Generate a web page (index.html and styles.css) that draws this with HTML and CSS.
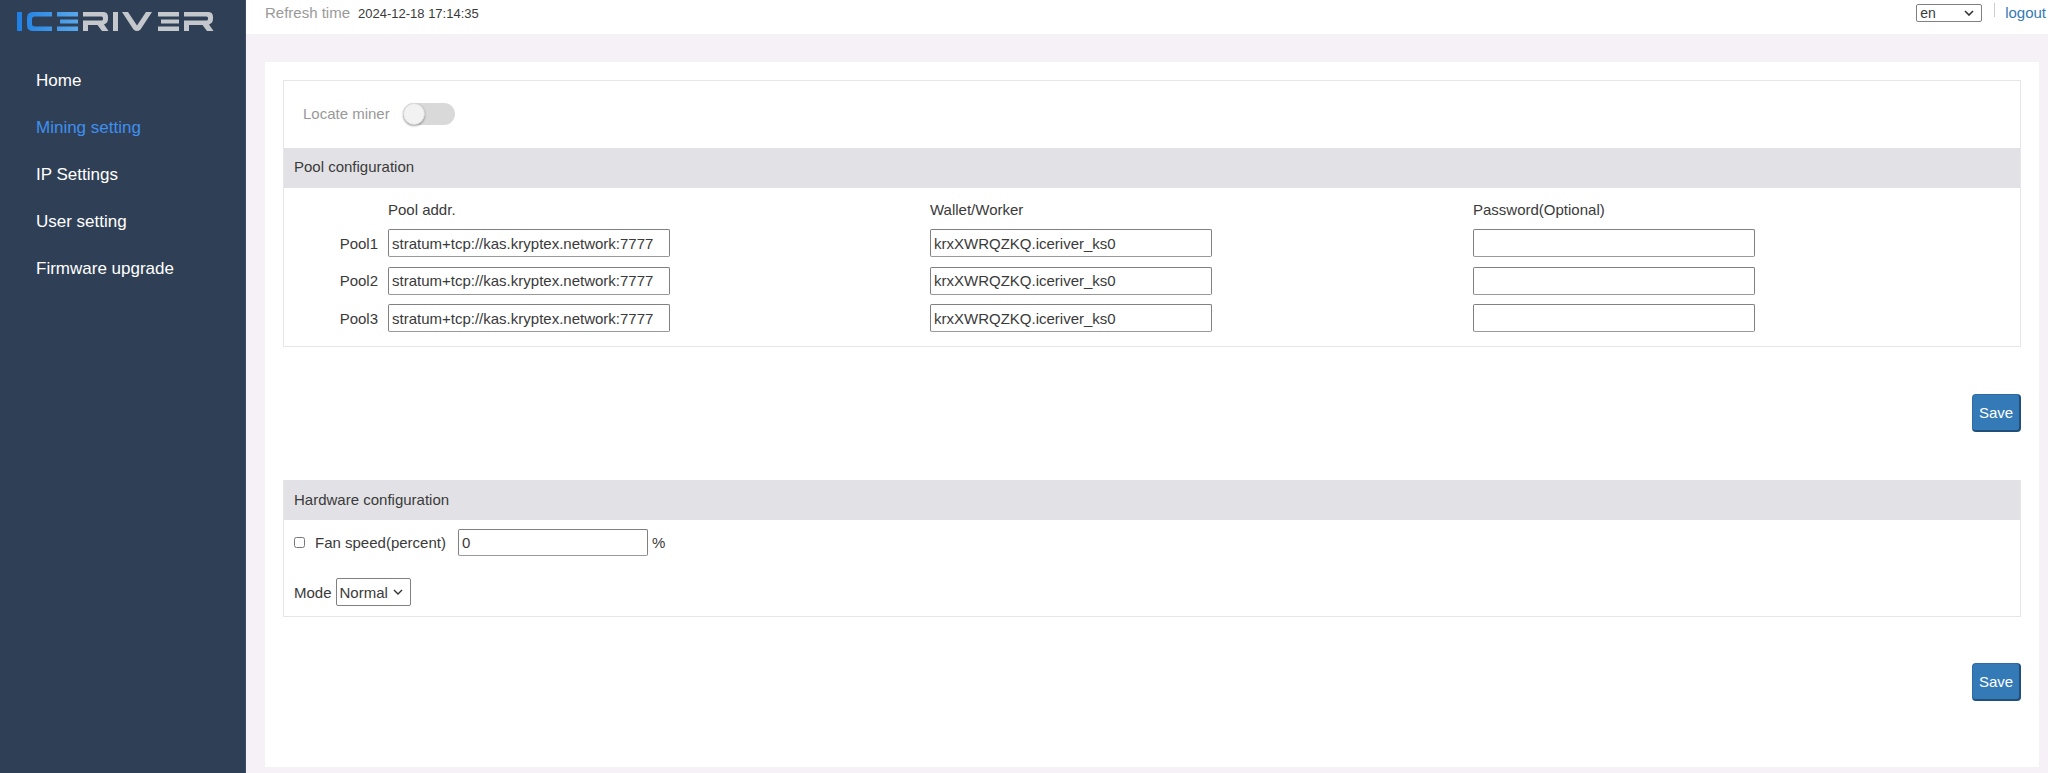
FILE: index.html
```html
<!DOCTYPE html>
<html lang="en">
<head>
<meta charset="utf-8">
<title>ICERIVER - Mining setting</title>
<link rel="stylesheet" href="styles.css">
</head>
<body>
<div class="app">
  <aside class="sidebar">
    <div class="logo">
      <svg width="245" height="40" viewBox="0 0 245 40" role="img" aria-label="ICERIVER">
        <defs>
          <linearGradient id="ice" x1="17" y1="0" x2="78" y2="0" gradientUnits="userSpaceOnUse">
            <stop offset="0" stop-color="#1e7fe4"/>
            <stop offset="1" stop-color="#58a8ea"/>
          </linearGradient>
        </defs>
        <g fill="url(#ice)">
          <rect x="17" y="12" width="5" height="19"/>
          <path d="M33 12H52V16.500H35Q32 16.500 32 19V24Q32 26.500 35 26.500H52V31H33Q27 31 27 25V18Q27 12 33 12Z"/>
          <path d="M57 12H78V16.500H57ZM60 19.500H78V23.500H60ZM57 26.500H78V31H57Z"/>
        </g>
        <g fill="#c4c8cc">
          <path d="M83 12H103Q108 12 108 17V19Q108 23 104 24.500L108.500 31H102L97.500 25H88V31H83V20.500H101.500Q103 20.500 103 19V18Q103 16.500 101.500 16.500H83Z"/>
          <rect x="113" y="12" width="5" height="19"/>
          <path d="M122 12H128L137 25.500L146 12H152L140.500 29.500Q137 32.500 133.500 29.500Z"/>
          <path d="M158 12H179V16.500H158ZM161 19.500H179V23.500H161ZM158 26.500H179V31H158Z"/>
          <path d="M184 12H208Q213 12 213 17V19Q213 23 209 24.500L213.500 31H207L202.500 25H189V31H184V20.500H206.500Q208 20.500 208 19V18Q208 16.500 206.500 16.500H184Z"/>
        </g>
      </svg>
    </div>
    <nav class="nav">
      <a class="nav-item" href="#">Home</a>
      <a class="nav-item active" href="#">Mining setting</a>
      <a class="nav-item" href="#">IP Settings</a>
      <a class="nav-item" href="#">User setting</a>
      <a class="nav-item" href="#">Firmware upgrade</a>
    </nav>
  </aside>
  <div class="main">
    <header class="topbar">
      <div class="refresh"><span class="refresh-label">Refresh time</span><span class="refresh-value">2024-12-18 17:14:35</span></div>
      <div class="top-actions">
        <select class="lang"><option>en</option></select>
        <span class="divider"></span>
        <a class="logout" href="#">logout</a>
      </div>
    </header>
    <main class="content">
      <section class="panel panel-pool">
        <div class="locate"><span class="locate-label">Locate miner</span><span class="toggle"><span class="knob"></span></span></div>
        <h2 class="panel-title">Pool configuration</h2>
        <div class="pool-grid">
          <span></span><span class="col-head">Pool addr.</span><span class="col-head">Wallet/Worker</span><span class="col-head">Password(Optional)</span>
          <label class="pool-label">Pool1</label><input class="field" value="stratum+tcp://kas.kryptex.network:7777"><input class="field" value="krxXWRQZKQ.iceriver_ks0"><input class="field">
          <label class="pool-label">Pool2</label><input class="field" value="stratum+tcp://kas.kryptex.network:7777"><input class="field" value="krxXWRQZKQ.iceriver_ks0"><input class="field">
          <label class="pool-label">Pool3</label><input class="field" value="stratum+tcp://kas.kryptex.network:7777"><input class="field" value="krxXWRQZKQ.iceriver_ks0"><input class="field">
        </div>
      </section>
      <div class="actions actions-pool"><button class="save">Save</button></div>
      <section class="panel panel-hw">
        <h2 class="panel-title panel-title-hw">Hardware configuration</h2>
        <div class="fan-row">
          <input class="check" type="checkbox">
          <span class="fan-label">Fan speed(percent)</span>
          <input class="field fan-input" value="0">
          <span>%</span>
        </div>
        <div class="mode-row">
          <span>Mode</span>
          <select class="mode"><option>Normal</option></select>
        </div>
      </section>
      <div class="actions actions-hw"><button class="save">Save</button></div>
    </main>
  </div>
</div>
</body>
</html>
```

FILE: styles.css
```css
* { box-sizing: border-box; }
html, body { margin: 0; height: 100%; overflow: hidden; }
body {
  font-family: "Liberation Sans", Arial, sans-serif;
  font-size: 15px;
  color: #3a3a3a;
  background: #f5f1f7;
}
.app { display: flex; height: 773px; }

.sidebar { width: 246px; flex: none; background: #2f4056; border-right: 1px solid #3d4d63; }
.logo { height: 40px; }
.logo svg { display: block; }
.nav { display: flex; flex-direction: column; padding: 17px 0 0 36px; }
.nav-item { height: 47px; line-height: 47px; font-size: 17px; color: #fff; text-decoration: none; }
.nav-item.active { color: #3f8fee; }

.main { flex: 1; min-width: 0; display: flex; flex-direction: column; }
.topbar {
  height: 34px;
  background: #fff;
  display: flex;
  justify-content: space-between;
  padding: 0 2px 0 19px;
}
.refresh { display: flex; align-items: baseline; padding-top: 4px; }
.refresh-label { color: #999; font-size: 15px; margin-right: 8px; }
.refresh-value { font-size: 13px; }
.top-actions { display: flex; align-items: flex-start; }
.lang {
  appearance: none;
  width: 66px; height: 18px; margin-top: 4px;
  font: 14px "Liberation Sans", Arial, sans-serif;
  color: #3a3a3a;
  background: #fff url("data:image/svg+xml,%3Csvg xmlns='http://www.w3.org/2000/svg' width='10' height='6'%3E%3Cpath d='M1 1l4 4 4-4' fill='none' stroke='%23333' stroke-width='1.6'/%3E%3C/svg%3E") no-repeat right 7px center;
  border: 1px solid #808080; border-radius: 2px;
  padding: 0 0 0 3px;
}
.divider { width: 1px; height: 14px; margin: 3px 10px 0 12px; background: #ccc; }
.logout { color: #337ab7; font-size: 15px; text-decoration: none; line-height: 26px; }

.content {
  margin: 28px 9px 6px 19px;
  height: 705px;
  background: #fff;
  padding: 18px 18px 0 18px;
}
.panel { border: 1px solid #e6e6e6; }
.panel-pool { height: 267px; }
.panel-hw { height: 137px; border-top: 0; }
.locate { height: 67px; display: flex; align-items: center; padding: 0 0 2px 19px; }
.locate-label { color: #999; margin-right: 13px; }
.toggle { position: relative; width: 52px; height: 22px; border-radius: 11px; background: #d9d9d9; display: block; }
.knob {
  position: absolute; left: 0; top: 0;
  width: 22px; height: 22px; border-radius: 50%;
  background: #f2f2f2; border: 1px solid #ddd;
  box-shadow: 0 1px 2px rgba(0,0,0,.35);
}
.panel-title {
  margin: 0; height: 40px; line-height: 38px;
  padding-left: 10px;
  font-size: 15px; font-weight: 400;
  background: #e2e2e6;
}
.panel-title-hw { line-height: 40px; }
.pool-grid {
  display: grid;
  grid-template-columns: 104px 542px 543px 1fr;
  grid-template-rows: 36.5px repeat(3, 37.5px);
}
.col-head { align-self: start; padding-top: 13px; line-height: 17px; }
.pool-label { align-self: center; text-align: right; padding-right: 10px; }
.field {
  height: 28px; width: 282px;
  padding: 0 3px;
  font: 15px "Liberation Sans", Arial, sans-serif;
  color: #3a3a3a;
  border: 1px solid #808080; border-bottom-color: #999; border-radius: 2px;
  background: #fff;
  align-self: center;
}
.actions { display: flex; justify-content: flex-end; }
.actions-pool { height: 133px; padding-top: 47px; }
.actions-hw { padding-top: 46px; }
.save {
  width: 49px; height: 38px; padding: 0;
  font: 15px "Liberation Sans", Arial, sans-serif;
  color: #fff;
  background: #337ab7;
  border: 1px solid #2e6da4;
  border-right: 2px solid #1f4f7a; border-bottom: 2px solid #1f4f7a;
  border-radius: 4px;
}
.fan-row { height: 44px; display: flex; align-items: center; padding-left: 10px; }
.check { width: 11px; height: 11px; margin: 0 10px 0 0; }
.fan-label { margin-right: 12px; }
.fan-input { width: 190px; height: 27px; margin-right: 4px; }
.mode-row { height: 52px; display: flex; align-items: center; padding: 4px 0 0 10px; }
.mode {
  appearance: none;
  width: 75px; height: 28px; margin-left: 4px;
  font: 15px "Liberation Sans", Arial, sans-serif;
  color: #3a3a3a;
  background: #fff url("data:image/svg+xml,%3Csvg xmlns='http://www.w3.org/2000/svg' width='10' height='6'%3E%3Cpath d='M1 1l4 4 4-4' fill='none' stroke='%23333' stroke-width='1.4'/%3E%3C/svg%3E") no-repeat right 7px center;
  border: 1px solid #808080; border-radius: 2px;
  padding: 0 0 0 3px;
}
```
